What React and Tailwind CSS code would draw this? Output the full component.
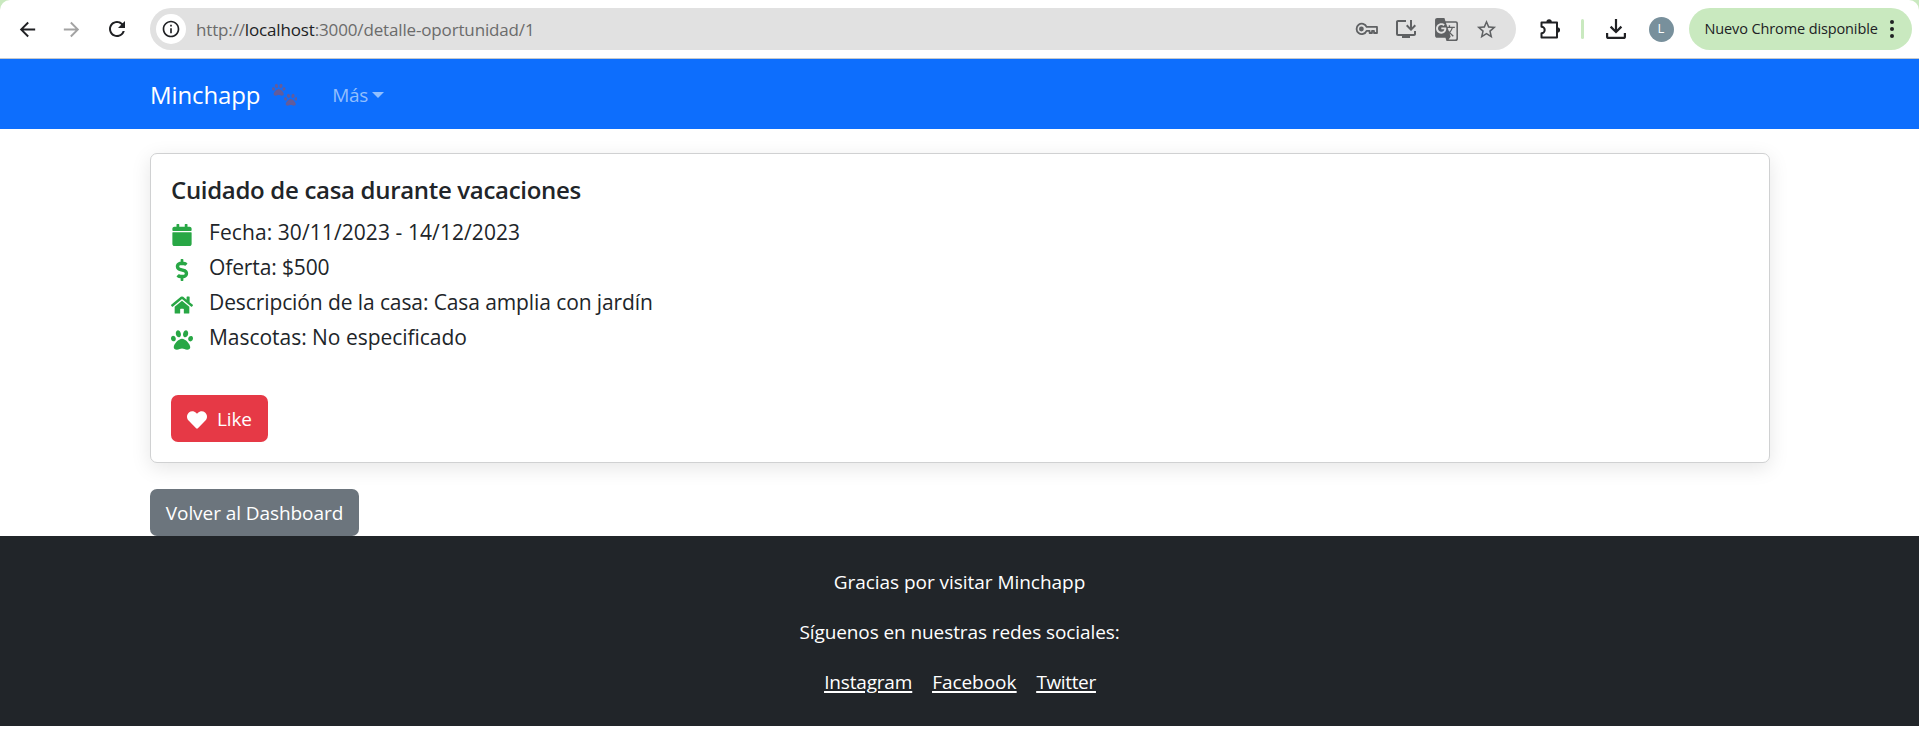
import { FaCalendar, FaDollarSign, FaHeart, FaHome, FaPaw } from "react-icons/fa";
import {
  MdArrowBack,
  MdArrowForward,
  MdGTranslate,
  MdOutlineInfo,
  MdOutlineInstallDesktop,
  MdRefresh,
  MdStarBorder,
} from "react-icons/md";

function PuzzleIcon() {
  return (
    <svg viewBox="0 0 20 20" className="h-5 w-5" fill="none" stroke="currentColor" strokeWidth="2" strokeLinejoin="round">
      <path d="M1.5 3.5H17V18.5H1.5V14.2A3.2 3.2 0 0 0 1.5 7.8Z" />
      <path d="M6.4 3A2.7 2.7 0 0 1 11.8 3ZM17.4 8.3A2.7 2.7 0 0 1 17.4 13.7Z" fill="currentColor" stroke="none" />
    </svg>
  );
}

function DownloadIcon() {
  return (
    <svg viewBox="0 0 20 20" className="h-5 w-5" fill="none" stroke="currentColor" strokeWidth="2.2">
      <path d="M10 0V12.6M4.6 7.6L10 13L15.4 7.6M1.1 14V17.4Q1.1 18.9 2.6 18.9H17.4Q18.9 18.9 18.9 17.4V14" />
    </svg>
  );
}

function KeyIcon() {
  return (
    <svg viewBox="0 0 23 14" className="h-3.5 w-[23px]" fill="none" stroke="currentColor" strokeWidth="1.8" strokeLinejoin="round">
      <path d="M11.6 4.9H22V11H19V8.9H17V11H14.6V8.9H11.6A5.2 5.2 0 1 1 11.6 4.9Z" />
      <circle cx="6.4" cy="7" r="2.4" fill="currentColor" stroke="none" />
    </svg>
  );
}

function BrowserBar() {
  return (
    <div className="bg-[#c9e9bf]">
      <div className="flex h-[59px] items-start rounded-t-[10px] border-b border-[#c4c8cc] bg-white pt-2 text-[#202124]">
        <div className="flex h-[42px] w-[150px] shrink-0 items-center pl-4">
          <MdArrowBack className="size-[23px]" />
          <MdArrowForward className="ml-[21px] size-[23px] text-[#a3a3a3]" />
          <MdRefresh className="ml-[22px] size-6" />
        </div>
        <div className="flex h-[42px] w-[1366px] items-center rounded-full bg-[#e1e1e1] pr-[18px] pl-1.5">
          <div className="flex size-[30px] items-center justify-center rounded-full bg-white">
            <MdOutlineInfo className="size-5" />
          </div>
          <div className="mt-0.5 ml-[10px] flex-1 text-[17px] tracking-[-0.15px] text-[#6b6b6b]">
            http://<span className="text-[#202124]">localhost</span>:3000/detalle-oportunidad/1
          </div>
          <div className="flex items-center text-[#5f6163]">
            <KeyIcon />
            <MdOutlineInstallDesktop className="ml-4 size-6" />
            <MdGTranslate className="ml-4 size-[25px]" />
            <MdStarBorder className="ml-4 size-[23px]" />
          </div>
        </div>
        <div className="flex h-[42px] items-center pl-6">
          <PuzzleIcon />
          <div className="ml-[21px] h-5 w-[2.5px] rounded-full bg-[#c9e9bf]" />
          <div className="ml-[22px]">
            <DownloadIcon />
          </div>
          <div className="ml-[23px] flex size-[25px] items-center justify-center rounded-full bg-[#78909c] text-[13px] text-white">L</div>
          <div className="ml-[15px] flex h-[42px] w-[223px] items-center rounded-full bg-[#c9e9bf] pl-4">
            <span className="w-[175px] text-[14.5px] tracking-[-0.12px] whitespace-nowrap">Nuevo Chrome disponible</span>
            <div className="ml-[10px] flex flex-col gap-[3px]">
              <i className="size-1 rounded-full bg-[#202124]" />
              <i className="size-1 rounded-full bg-[#202124]" />
              <i className="size-1 rounded-full bg-[#202124]" />
            </div>
          </div>
        </div>
      </div>
    </div>
  );
}

function Navbar() {
  return (
    <nav className="flex h-[70px] items-center bg-[#0d6efd] px-[150px] pt-0.5">
      <span className="text-2xl tracking-[-0.12px] text-white">Minchapp</span>
      <span className="ml-3 flex h-6 items-start text-[#625c9c]">
        <FaPaw className="size-[13.5px]" />
        <FaPaw className="mt-[10px] -ml-[2px] size-[13.5px]" />
      </span>
      <span className="ml-[35px] text-[19px] tracking-[-0.3px] text-[#92bffe]">Más</span>
      <span className="-mt-px ml-1 border-x-6 border-t-6 border-x-transparent border-t-[#92bffe]" />
    </nav>
  );
}

function Detail({ icon: Icon, className, children }) {
  return (
    <li className="flex h-[35.2px] items-center">
      <Icon className="mt-1 size-[22px] text-[#28a745]" />
      <span className={className}>{children}</span>
    </li>
  );
}

function OpportunityCard() {
  return (
    <section className="h-[310px] rounded-[7px] border border-[#d0d1d2] bg-white px-5 pt-[17px] shadow-[0_5px_20px_rgba(0,0,0,0.1)]">
      <h1 className="h-[37px] text-2xl leading-[37px] font-semibold tracking-[-0.31px]">Cuidado de casa durante vacaciones</h1>
      <ul className="mt-[7px] text-[21px] whitespace-nowrap">
        <Detail icon={FaCalendar} className="ml-4 tracking-[0.08px]">Fecha: 30/11/2023 - 14/12/2023</Detail>
        <Detail icon={FaDollarSign} className="ml-4 tracking-[-0.12px]">Oferta: $500</Detail>
        <Detail icon={FaHome} className="ml-4 tracking-[-0.1px]">Descripción de la casa: Casa amplia con jardín</Detail>
        <Detail icon={FaPaw} className="ml-4 tracking-[-0.03px]">Mascotas: No especificado</Detail>
      </ul>
      <button className="mt-[39px] flex h-[47px] w-[97px] items-center rounded-[7px] bg-[#e63946] pl-4 text-[19px] text-white">
        <FaHeart className="mt-1 size-5" />
        <span className="mt-px ml-[10px] tracking-[-0.15px]">Like</span>
      </button>
    </section>
  );
}

function Footer() {
  return (
    <footer className="h-[190px] bg-[#212529] pt-[31px] text-center text-[19px] text-white">
      <p className="h-[50px] leading-[30px] tracking-[-0.04px]">Gracias por visitar Minchapp</p>
      <p className="h-[50px] leading-[30px] tracking-[-0.09px]">Síguenos en nuestras redes sociales:</p>
      <div className="flex justify-center gap-5 pl-px leading-[30px] underline decoration-2 underline-offset-2">
        <a className="tracking-[-0.18px]">Instagram</a>
        <a className="tracking-[-0.04px]">Facebook</a>
        <a className="tracking-[-0.37px]">Twitter</a>
      </div>
    </footer>
  );
}

export default function App() {
  return (
    <div className="h-[753px] w-[1919px] overflow-hidden bg-white font-['Open_Sans','Noto_Sans',sans-serif] text-[#212529]">
      <BrowserBar />
      <Navbar />
      <main className="pt-6 pr-[149px] pl-[150px]">
        <OpportunityCard />
        <button className="mt-[26px] block h-[47px] w-[209px] rounded-[7px] bg-[#6c757d] pt-px text-[19px] tracking-[-0.07px] text-white">
          Volver al Dashboard
        </button>
      </main>
      <Footer />
    </div>
  );
}
